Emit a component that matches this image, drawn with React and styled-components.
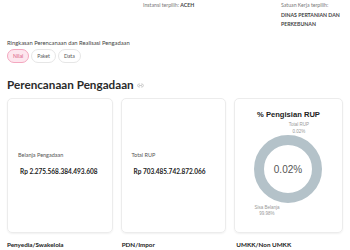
import styled, { createGlobalStyle } from "styled-components";
import { Link2 } from "lucide-react";

const GlobalStyle = createGlobalStyle`
  body {
    margin: 0;
    background: #fff;
    font-family: "Lato", "Noto Sans", sans-serif;
    color: #333;
  }
`;

const Page = styled.div`
  padding: 1px 7px 0;
`;

const TopBar = styled.div`
  display: grid;
  grid-template-columns: 136px 138px 1fr;
  font-size: 5.2px;
  line-height: 9.5px;
  color: #777;
  white-space: nowrap;
`;

const InfoValue = styled.span`
  color: #444;
  font-weight: 700;
`;

const Summary = styled.div`
  margin-top: 9.5px;
  font-size: 5.8px;
  line-height: 8px;
  color: #444;
`;

const PillRow = styled.div`
  display: flex;
  gap: 2px;
  margin-top: 2px;
`;

const Pill = styled.button`
  height: 14px;
  padding: 0 5px;
  border-radius: 7px;
  font-family: inherit;
  font-size: 5.2px;
  border: 0.8px solid ${(p) => (p.$active ? "#f4a7bf" : "#e6e6e6")};
  background: ${(p) => (p.$active ? "#fde6ee" : "#fff")};
  color: ${(p) => (p.$active ? "#d9597f" : "#555")};
`;

const Heading = styled.h2`
  margin: 13px 0 0;
  font-size: 11.7px;
  line-height: 16px;
  font-weight: 700;
  color: #2a2a2a;
  display: flex;
  align-items: center;
  gap: 3px;

  svg {
    color: #aaa;
    margin-top: 3px;
  }
`;

const CardRow = styled.div`
  display: grid;
  grid-template-columns: repeat(3, 1fr);
  gap: 8px;
  margin-top: 6px;
`;

const Card = styled.div`
  height: 135px;
  box-sizing: border-box;
  border: 1px solid #ececec;
  border-radius: 5px;
  box-shadow: 0 1px 2px rgba(0, 0, 0, 0.06);
  display: flex;
  flex-direction: column;
  justify-content: ${(p) => (p.$chart ? "flex-start" : "center")};
  align-items: ${(p) => (p.$chart ? "center" : "stretch")};
  padding: ${(p) => (p.$chart ? "12px 0 0" : "0 0 3px 10px")};
`;

const StatLabel = styled.div`
  font-size: 5.5px;
  line-height: 8px;
  color: #555;
`;

const StatValue = styled.div`
  margin-top: 8px;
  padding-left: 2px;
  font-size: 6.5px;
  line-height: 10px;
  font-weight: 700;
  color: #222;
`;

const ChartTitle = styled.div`
  font-family: "Liberation Sans", Arial, sans-serif;
  font-size: 7.6px;
  line-height: 8px;
  font-weight: 700;
  color: #222;
`;

const Chart = styled.svg`
  display: block;
  font-family: "Liberation Sans", Arial, sans-serif;
`;

const SectionRow = styled.div`
  display: grid;
  grid-template-columns: repeat(3, 1fr);
  gap: 8px;
  margin-top: 8px;
`;

const SectionLabel = styled.div`
  font-size: 6.3px;
  line-height: 8px;
  font-weight: 700;
  color: #222;
`;

const stats = [
  { label: "Belanja Pengadaan", value: "Rp 2.275.568.384.493.608" },
  { label: "Total RUP", value: "Rp 703.485.742.872.066" },
];

export default function App() {
  return (
    <>
      <GlobalStyle />
      <Page>
        <TopBar>
          <div />
          <div>
            Instansi terpilih: <InfoValue>ACEH</InfoValue>
          </div>
          <div>
            Satuan Kerja terpilih:
            <br />
            <InfoValue>DINAS PERTANIAN DAN</InfoValue>
            <br />
            <InfoValue>PERKEBUNAN</InfoValue>
          </div>
        </TopBar>

        <Summary>Ringkasan Perencanaan dan Realisasi Pengadaan</Summary>
        <PillRow>
          <Pill $active>Nilai</Pill>
          <Pill>Paket</Pill>
          <Pill>Data</Pill>
        </PillRow>

        <Heading>
          Perencanaan Pengadaan <Link2 size={7} strokeWidth={2} />
        </Heading>

        <CardRow>
          {stats.map((s) => (
            <Card key={s.label}>
              <StatLabel>{s.label}</StatLabel>
              <StatValue>{s.value}</StatValue>
            </Card>
          ))}
          <Card $chart>
            <ChartTitle>% Pengisian RUP</ChartTitle>
            <Chart width="107" height="105" viewBox="0 0 107 105">
              <circle cx="53" cy="50" r="29" fill="none" stroke="#b4c2c9" strokeWidth="10" />
              <text x="53" y="53.5" textAnchor="middle" fontSize="10" fill="#555">
                0.02%
              </text>
              <text x="64" y="7" textAnchor="middle" fontSize="4.5" fill="#999">
                Total RUP
              </text>
              <text x="64" y="14" textAnchor="middle" fontSize="4.5" fill="#999">
                0.02%
              </text>
              <text x="32" y="90" textAnchor="middle" fontSize="4.5" fill="#999">
                Sisa Belanja
              </text>
              <text x="32" y="96" textAnchor="middle" fontSize="4.5" fill="#999">
                99.98%
              </text>
            </Chart>
          </Card>
        </CardRow>

        <SectionRow>
          <SectionLabel>Penyedia/Swakelola</SectionLabel>
          <SectionLabel>PDN/Impor</SectionLabel>
          <SectionLabel>UMKK/Non UMKK</SectionLabel>
        </SectionRow>
      </Page>
    </>
  );
}
